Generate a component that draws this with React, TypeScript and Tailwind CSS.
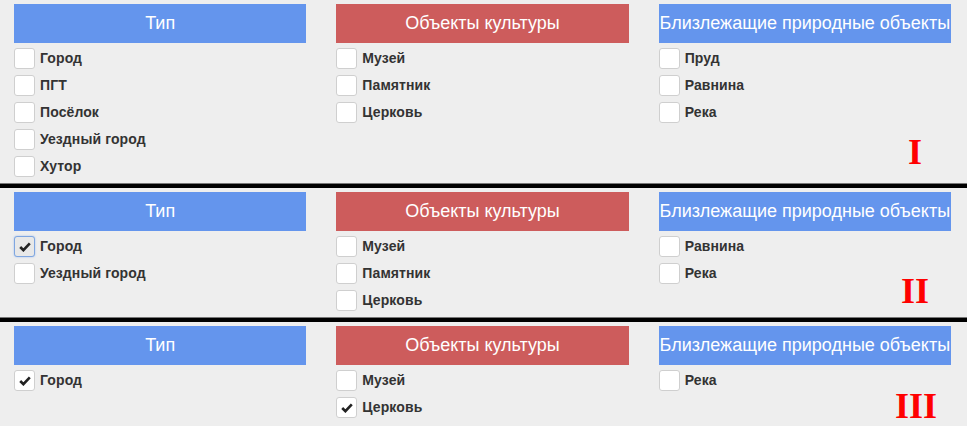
import React from "react";

type Item = { label: string; checked?: boolean; focused?: boolean };

interface PanelProps {
  types: Item[];
  culture: Item[];
  nature: Item[];
  numeral: string;
  numeralTop: string;
  last?: boolean;
}

function Check({ checked, focused }: { checked?: boolean; focused?: boolean }) {
  return (
    <span
      className={`flex h-[21px] w-[21px] shrink-0 items-center justify-center rounded-[3px] border ${
        focused ? "border-[#7fa6e0] bg-[#e8e8e8] shadow-[0_0_2px_#9bbcf0]" : "border-[#cfcfcf] bg-white"
      }`}
    >
      {checked && (
        <svg width="12" height="10" viewBox="0 0 12 10">
          <path d="M1.2 5 L4.4 8.2 L10.8 1.4" fill="none" stroke="#222" strokeWidth="2.6" strokeLinejoin="miter" />
        </svg>
      )}
    </span>
  );
}

function Column({ title, color, items }: { title: string; color: string; items: Item[] }) {
  return (
    <div>
      <div className={`flex h-[39px] items-center justify-center text-[18px] text-white ${color}`}>{title}</div>
      <div className="mt-[5px] flex flex-col gap-[6px]">
        {items.map((item) => (
          <label key={item.label} className="flex h-[21px] items-center gap-[5px]">
            <Check checked={item.checked} focused={item.focused} />
            <span className="text-[14px] font-bold tracking-[0.1px] text-[#333]">{item.label}</span>
          </label>
        ))}
      </div>
    </div>
  );
}

function Panel({ types, culture, nature, numeral, numeralTop, last }: PanelProps) {
  return (
    <>
      <div className="relative grid grid-cols-3 gap-x-[30px] bg-[#eeeeee] pb-[6px] pl-[14px] pr-[16px] pt-[4px]">
        <Column title="Тип" color="bg-[#6495ed]" items={types} />
        <Column title="Объекты культуры" color="bg-[#cd5c5c]" items={culture} />
        <Column title="Близлежащие природные объекты" color="bg-[#6495ed]" items={nature} />
        <div
          className={`absolute right-[32px] w-[40px] text-center text-[36px] font-bold leading-none text-[#ff0000] ${numeralTop}`}
          style={{ fontFamily: '"Liberation Serif", "Times New Roman", serif' }}
        >
          {numeral}
        </div>
      </div>
      {!last && (
        <>
          <div className="h-px bg-[#777]" />
          <div className="h-[4px] bg-black" />
        </>
      )}
    </>
  );
}

export default function App() {
  return (
    <div
      className="h-[426px] w-[967px] overflow-hidden bg-[#eeeeee]"
      style={{ fontFamily: '"Liberation Sans", Arial, sans-serif' }}
    >
      <Panel
        types={[{ label: "Город" }, { label: "ПГТ" }, { label: "Посёлок" }, { label: "Уездный город" }, { label: "Хутор" }]}
        culture={[{ label: "Музей" }, { label: "Памятник" }, { label: "Церковь" }]}
        nature={[{ label: "Пруд" }, { label: "Равнина" }, { label: "Река" }]}
        numeral="I"
        numeralTop="top-[134px]"
      />
      <Panel
        types={[{ label: "Город", checked: true, focused: true }, { label: "Уездный город" }]}
        culture={[{ label: "Музей" }, { label: "Памятник" }, { label: "Церковь" }]}
        nature={[{ label: "Равнина" }, { label: "Река" }]}
        numeral="II"
        numeralTop="top-[85px]"
      />
      <Panel
        types={[{ label: "Город", checked: true }]}
        culture={[{ label: "Музей" }, { label: "Церковь", checked: true }]}
        nature={[{ label: "Река" }]}
        numeral="III"
        numeralTop="top-[66px]"
        last
      />
    </div>
  );
}
